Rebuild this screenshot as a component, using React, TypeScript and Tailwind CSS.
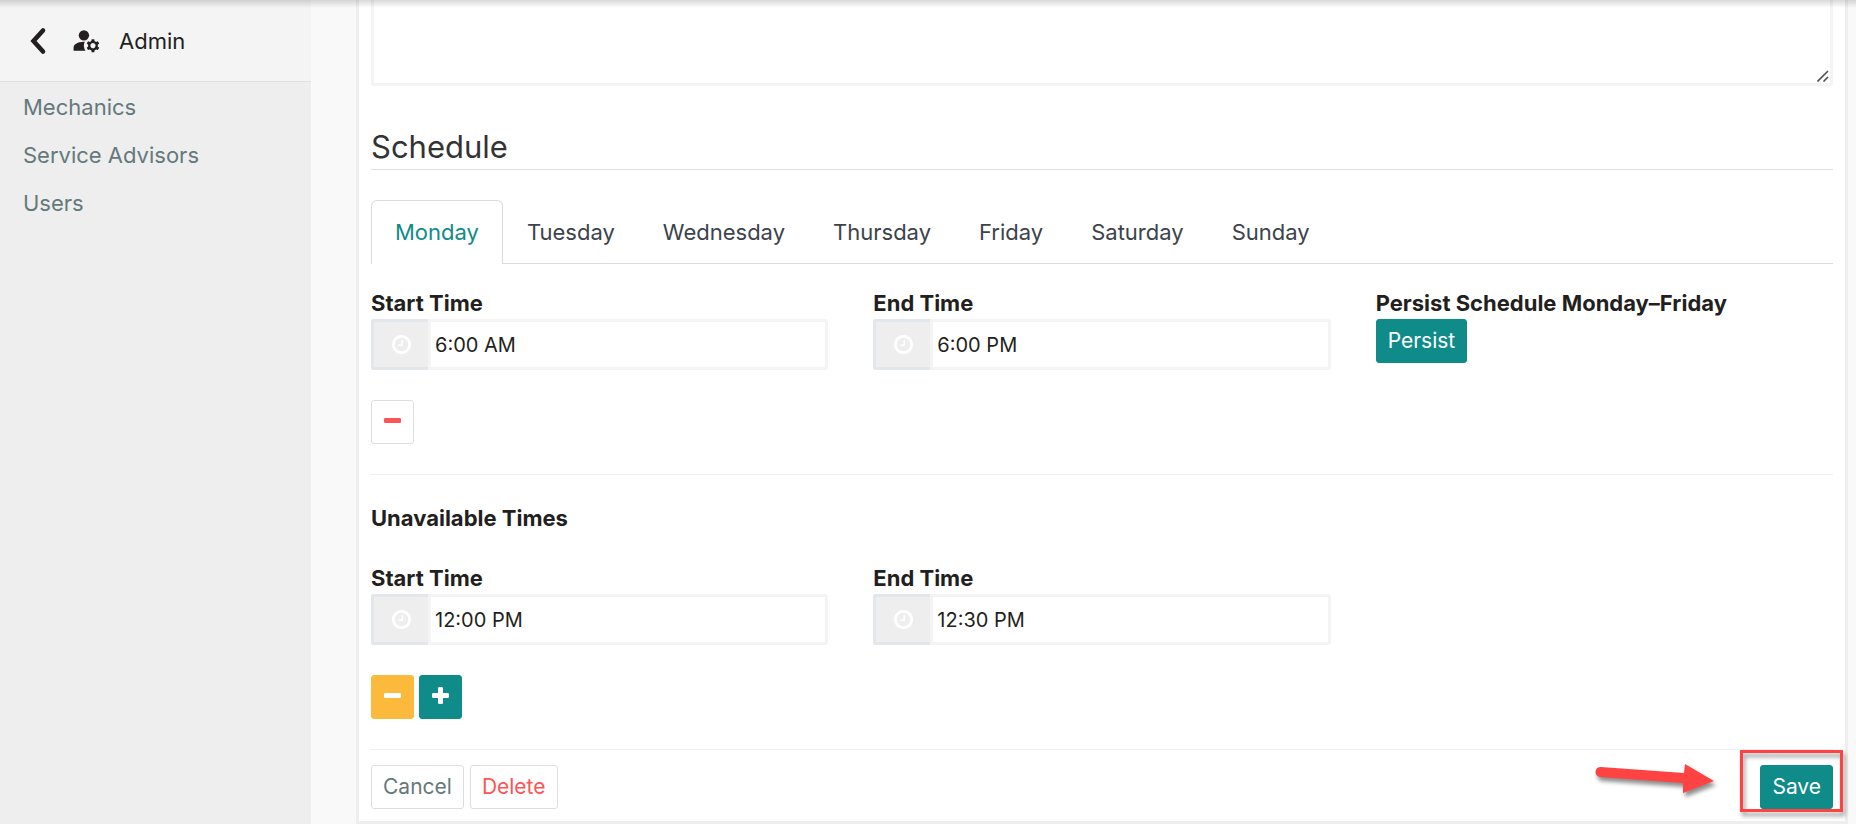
import { useState } from "react";
import clsx from "clsx";
import { MdManageAccounts } from "react-icons/md";

const sideLinks = ["Mechanics", "Service Advisors", "Users"];

const days = ["Monday", "Tuesday", "Wednesday", "Thursday", "Friday", "Saturday", "Sunday"];

const btn = "flex h-11 items-center justify-center rounded-[3px] border px-[11px] text-[21px] leading-6";
const btnTeal = "border-[#0f8b8a] bg-[#0f8b8a] text-white";
const btnPlain = "border-[#dedede] bg-white";
const btnIcon = "flex h-11 w-[43px] items-center justify-center rounded-[3px] border pb-[3px]";

function ChevronIcon() {
  return (
    <svg viewBox="0 0 18 28" className="h-7 w-[18px]" fill="none" stroke="currentColor" strokeWidth="4.6" strokeLinecap="round" aria-hidden="true">
      <path d="M14 3.5 L4.5 14 L14 24.5" />
    </svg>
  );
}

function ClockIcon() {
  return (
    <svg viewBox="0 128 1536 1536" className="h-[19px] w-[19px]" fill="currentColor" aria-hidden="true">
      <path d="M896 544v448q0 14-9 23t-23 9h-320q-14 0-23-9t-9-23v-64q0-14 9-23t23-9h224v-352q0-14 9-23t23-9h64q14 0 23 9t9 23zm416 352q0-148-73-273t-198-198-273-73-273 73-198 198-73 273 73 273 198 198 273 73 273-73 198-198 73-273zm224 0q0 209-103 385.5t-279.5 279.5-385.5 103-385.5-103-279.5-279.5-103-385.5 103-385.5 279.5-279.5 385.5-103 385.5 103 279.5 279.5 103 385.5z" />
    </svg>
  );
}

function MinusIcon() {
  return (
    <svg viewBox="0 0 17 17" className="h-[17px] w-[17px]" fill="currentColor" aria-hidden="true">
      <rect x="0" y="6" width="17" height="5" rx="1.2" />
    </svg>
  );
}

function PlusIcon() {
  return (
    <svg viewBox="0 0 17 17" className="h-[17px] w-[17px]" fill="currentColor" aria-hidden="true">
      <rect x="0" y="6" width="17" height="5" rx="1.2" />
      <rect x="6" y="0" width="5" height="17" rx="1.2" />
    </svg>
  );
}

interface TimeFieldProps {
  id: string;
  label: string;
  value: string;
}

function TimeField({ id, label, value }: TimeFieldProps) {
  return (
    <div className="min-w-0">
      <label htmlFor={id} className="block h-8 text-[22px] leading-8 font-bold">
        {label}
      </label>
      <div className="flex h-[51px]">
        <span className="flex w-[57px] shrink-0 items-center justify-center rounded-l-[3px] border-3 border-r-0 border-[#e3e6ea] bg-[#eeeeee] text-white">
          <ClockIcon />
        </span>
        <input
          id={id}
          type="text"
          defaultValue={value}
          className="w-full min-w-0 rounded-r-[3px] border-3 border-[#f4f4f4] bg-white px-1 text-[20px] outline-none"
        />
      </div>
    </div>
  );
}

function Arrow() {
  return (
    <svg viewBox="0 0 126 40" className="h-10 w-[126px] drop-shadow-[2px_4px_2px_rgba(0,0,0,0.45)]" aria-hidden="true">
      <path d="M9 4 L92 10 L93 1 L122 18 L91 30 L91 20 L8 14 A5 5 0 0 1 9 4 Z" fill="#ff4343" />
    </svg>
  );
}

export default function App() {
  const [activeDay, setActiveDay] = useState("Monday");

  return (
    <div className="relative flex min-h-screen bg-[#f9f9f9] font-[Inter,sans-serif] text-[#231f20]">
      {/* Shadow of the top bar */}
      <div className="pointer-events-none absolute inset-x-0 top-0 z-10 h-2 bg-linear-to-b from-black/15 to-transparent" />

      {/* Sidebar */}
      <aside className="w-[311px] shrink-0 bg-[#eeeeee]">
        <div className="flex h-[82px] items-center border-b border-[#dfdfdf] bg-[#f4f4f4] pl-[29px]">
          <button aria-label="Back" className="mr-6">
            <ChevronIcon />
          </button>
          <MdManageAccounts className="mr-[17px] h-[31px] w-[31px]" />
          <span className="text-[22px] leading-8">Admin</span>
        </div>
        <nav className="flex flex-col gap-4 px-[23px] pt-[9px]">
          {sideLinks.map((link) => (
            <a key={link} href="#" className="text-[22px] leading-8 text-[#65797a]">
              {link}
            </a>
          ))}
        </nav>
      </aside>

      {/* Card */}
      <main className="min-w-0 flex-1 pr-2 pl-[45px]">
        <div className="border-3 border-t-0 border-[#eeeeee] bg-white px-3 pb-3">
          <div className="relative">
            <textarea
              aria-label="Notes"
              className="block h-[86px] w-full resize-none rounded-b-[3px] border-3 border-t-0 border-[#f4f4f4] outline-none"
            />
            {/* Resize grip */}
            <svg
              viewBox="0 0 12 12"
              className="pointer-events-none absolute right-1 bottom-1 h-3 w-3"
              stroke="#505050"
              strokeWidth="1.6"
              aria-hidden="true"
            >
              <path d="M0.5 11.5 L11 1 M6.5 11.5 L11 7" />
            </svg>
          </div>

          <h2 className="mt-10 h-11 border-b border-[#e2e2e2] text-[31px] leading-[42px] text-[#333333]">Schedule</h2>

          {/* Day tabs */}
          <div role="tablist" className="mt-[30px] flex h-16 border-b border-[#dbdbdb]">
            {days.map((day) => (
              <button
                key={day}
                role="tab"
                aria-selected={day === activeDay}
                onClick={() => setActiveDay(day)}
                className={clsx(
                  "-mb-px rounded-t-md border border-b-0 px-[23px] text-[22px]",
                  day === activeDay ? "border-[#dbdbdb] bg-white text-[#0f8b8a]" : "border-transparent text-[#3c434b]"
                )}
              >
                {day}
              </button>
            ))}
          </div>

          <div className="mt-[23px] grid grid-cols-3 gap-x-[45px]">
            <TimeField id="start" label="Start Time" value="6:00 AM" />
            <TimeField id="end" label="End Time" value="6:00 PM" />
            <div>
              <p className="h-8 text-[22px] leading-8 font-bold whitespace-nowrap">Persist Schedule Monday–Friday</p>
              <button className={clsx(btn, btnTeal)}>Persist</button>
            </div>
          </div>

          <button aria-label="Remove time" className={clsx(btnIcon, btnPlain, "mt-[30px] text-[#ff5454]")}>
            <MinusIcon />
          </button>

          <hr className="mt-[30px] border-[#eeeeee]" />

          <h3 className="mt-[27px] text-[22px] leading-8 font-bold">Unavailable Times</h3>

          <div className="mt-7 grid grid-cols-3 gap-x-[45px]">
            <TimeField id="off-start" label="Start Time" value="12:00 PM" />
            <TimeField id="off-end" label="End Time" value="12:30 PM" />
          </div>

          <div className="mt-[30px] flex gap-[5px]">
            <button aria-label="Remove unavailable time" className={clsx(btnIcon, "border-[#fbba3c] bg-[#fbba3c] text-white")}>
              <MinusIcon />
            </button>
            <button aria-label="Add unavailable time" className={clsx(btnIcon, btnTeal)}>
              <PlusIcon />
            </button>
          </div>

          <hr className="mt-[30px] border-[#eeeeee]" />

          {/* Form actions */}
          <div className="mt-[15px] flex gap-1.5">
            <button className={clsx(btn, btnPlain, "text-[#65797a]")}>Cancel</button>
            <button className={clsx(btn, btnPlain, "text-[#ff5454]")}>Delete</button>
            <div className="relative ml-auto">
              <button className={clsx(btn, btnTeal)}>Save</button>
              <div className="pointer-events-none absolute -top-[15px] -right-2.5 h-[62px] w-[103px] border-3 border-[#ff4343] drop-shadow-[2px_4px_2px_rgba(0,0,0,0.4)]" />
              <div className="pointer-events-none absolute -top-0.5 right-[115px]">
                <Arrow />
              </div>
            </div>
          </div>
        </div>
      </main>
    </div>
  );
}
